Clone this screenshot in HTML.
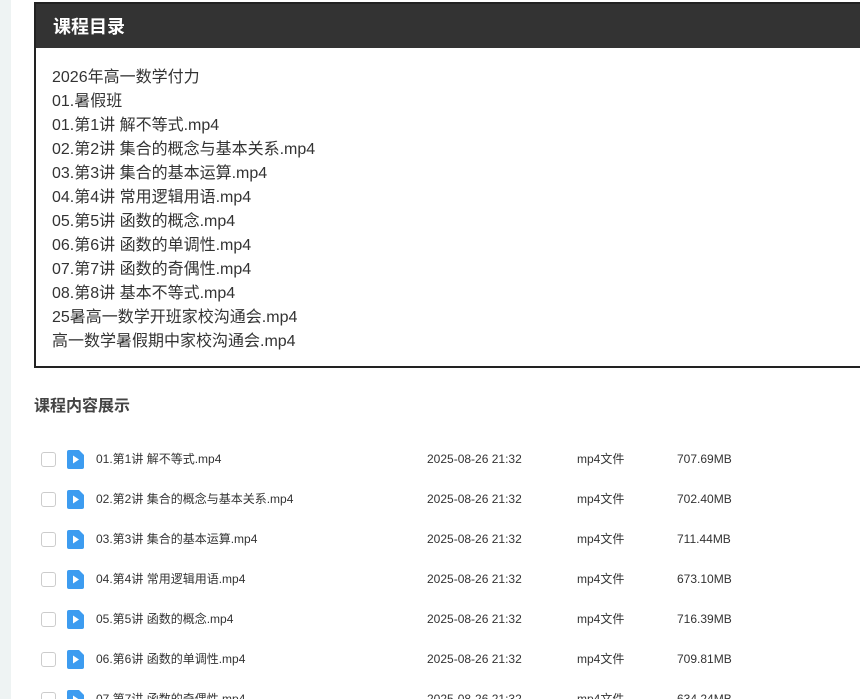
<!DOCTYPE html>
<html style="overflow:hidden;height:699px"><head><meta charset="utf-8"><style>
body{margin:0;width:860px;height:699px;overflow:hidden;background:#fff;font-family:"Liberation Sans","Noto Sans CJK SC",sans-serif;position:relative}
.strip{position:absolute;left:0;top:0;width:11px;height:699px;background:#eef3f3}
.box{position:absolute;left:34px;top:2px;width:840px;height:366px;border:2px solid #222;box-sizing:border-box}
.hd{background:#333;color:#fff;font-weight:bold;font-size:18px;height:44px;line-height:46px;padding-left:17px}
.ls{padding:18px 0 0 16px;font-size:16px;color:#333;line-height:24px}
.t2{position:absolute;left:34px;top:396px;font-size:16px;font-weight:bold;color:#444;line-height:22px}
.row{position:absolute;left:0;height:20px;width:860px;font-size:12px;color:#333}
.cb{position:absolute;left:41px;top:3px;width:13px;height:13px;border:1px solid #ccc;border-radius:3px}
.ic{position:absolute;left:67px;top:1px}
.row span{position:absolute;top:3px;line-height:14px;height:14px;white-space:nowrap}
</style></head><body>
<div class="strip"></div>
<div class="box"><div class="hd">课程目录</div><div class="ls">
2026年高一数学付力<br>01.暑假班<br>01.第1讲 解不等式.mp4<br>02.第2讲 集合的概念与基本关系.mp4<br>03.第3讲 集合的基本运算.mp4<br>04.第4讲 常用逻辑用语.mp4<br>05.第5讲 函数的概念.mp4<br>06.第6讲 函数的单调性.mp4<br>07.第7讲 函数的奇偶性.mp4<br>08.第8讲 基本不等式.mp4<br>25暑高一数学开班家校沟通会.mp4<br>高一数学暑假期中家校沟通会.mp4</div></div>
<div class="t2">课程内容展示</div>
<div class="row" style="top:449px"><div class="cb"></div><svg class="ic" width="17" height="19"><path d="M2 0H12L17 5V17Q17 19 15 19H2Q0 19 0 17V2Q0 0 2 0Z" fill="#3d9cf0"/><path d="M6 5.5L12 9.5L6 13.5Z" fill="#fff"/></svg><span style="left:96px">01.第1讲 解不等式.mp4</span><span style="left:427px">2025-08-26 21:32</span><span style="left:577px">mp4文件</span><span style="left:677px">707.69MB</span></div>
<div class="row" style="top:489px"><div class="cb"></div><svg class="ic" width="17" height="19"><path d="M2 0H12L17 5V17Q17 19 15 19H2Q0 19 0 17V2Q0 0 2 0Z" fill="#3d9cf0"/><path d="M6 5.5L12 9.5L6 13.5Z" fill="#fff"/></svg><span style="left:96px">02.第2讲 集合的概念与基本关系.mp4</span><span style="left:427px">2025-08-26 21:32</span><span style="left:577px">mp4文件</span><span style="left:677px">702.40MB</span></div>
<div class="row" style="top:529px"><div class="cb"></div><svg class="ic" width="17" height="19"><path d="M2 0H12L17 5V17Q17 19 15 19H2Q0 19 0 17V2Q0 0 2 0Z" fill="#3d9cf0"/><path d="M6 5.5L12 9.5L6 13.5Z" fill="#fff"/></svg><span style="left:96px">03.第3讲 集合的基本运算.mp4</span><span style="left:427px">2025-08-26 21:32</span><span style="left:577px">mp4文件</span><span style="left:677px">711.44MB</span></div>
<div class="row" style="top:569px"><div class="cb"></div><svg class="ic" width="17" height="19"><path d="M2 0H12L17 5V17Q17 19 15 19H2Q0 19 0 17V2Q0 0 2 0Z" fill="#3d9cf0"/><path d="M6 5.5L12 9.5L6 13.5Z" fill="#fff"/></svg><span style="left:96px">04.第4讲 常用逻辑用语.mp4</span><span style="left:427px">2025-08-26 21:32</span><span style="left:577px">mp4文件</span><span style="left:677px">673.10MB</span></div>
<div class="row" style="top:609px"><div class="cb"></div><svg class="ic" width="17" height="19"><path d="M2 0H12L17 5V17Q17 19 15 19H2Q0 19 0 17V2Q0 0 2 0Z" fill="#3d9cf0"/><path d="M6 5.5L12 9.5L6 13.5Z" fill="#fff"/></svg><span style="left:96px">05.第5讲 函数的概念.mp4</span><span style="left:427px">2025-08-26 21:32</span><span style="left:577px">mp4文件</span><span style="left:677px">716.39MB</span></div>
<div class="row" style="top:649px"><div class="cb"></div><svg class="ic" width="17" height="19"><path d="M2 0H12L17 5V17Q17 19 15 19H2Q0 19 0 17V2Q0 0 2 0Z" fill="#3d9cf0"/><path d="M6 5.5L12 9.5L6 13.5Z" fill="#fff"/></svg><span style="left:96px">06.第6讲 函数的单调性.mp4</span><span style="left:427px">2025-08-26 21:32</span><span style="left:577px">mp4文件</span><span style="left:677px">709.81MB</span></div>
<div class="row" style="top:689px;height:10px;overflow:hidden"><div class="cb"></div><svg class="ic" width="17" height="19"><path d="M2 0H12L17 5V17Q17 19 15 19H2Q0 19 0 17V2Q0 0 2 0Z" fill="#3d9cf0"/><path d="M6 5.5L12 9.5L6 13.5Z" fill="#fff"/></svg><span style="left:96px">07.第7讲 函数的奇偶性.mp4</span><span style="left:427px">2025-08-26 21:32</span><span style="left:577px">mp4文件</span><span style="left:677px">634.24MB</span></div>
</body></html>
